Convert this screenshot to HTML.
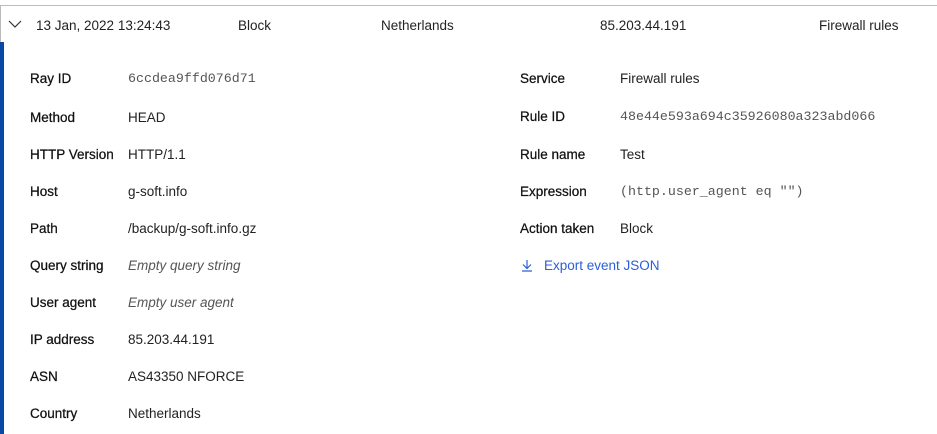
<!DOCTYPE html><html><head><style>
body{margin:0;width:937px;height:434px;overflow:hidden;background:#fff;font-family:"Liberation Sans",sans-serif;font-size:13.5px;color:#222;position:relative}
.t{position:absolute;white-space:nowrap;line-height:16px;margin-top:1px}
.m{font-family:"Liberation Mono",monospace;font-size:13.3px;color:#555}
.i{font-style:italic;color:#555}
.lb{color:#111;-webkit-text-stroke:0.25px #111}
</style></head><body>
<div style="position:absolute;left:0;top:5px;width:937px;height:1px;background:#bbb"></div>
<div style="position:absolute;left:0;top:5px;width:1px;height:38px;background:#bbb"></div>
<div style="position:absolute;left:0;top:42px;width:4px;height:392px;background:#0a48a8"></div>
<svg style="position:absolute;left:8px;top:19px" width="14" height="10"><path d="M1 2 L7 8 L13 2" fill="none" stroke="#333" stroke-width="1.2"/></svg>
<div class="t" style="left:36px;top:17px">13 Jan, 2022 13:24:43</div>
<div class="t" style="left:238px;top:17px">Block</div>
<div class="t" style="left:381px;top:17px">Netherlands</div>
<div class="t" style="left:600px;top:17px">85.203.44.191</div>
<div class="t" style="left:819px;top:17px">Firewall rules</div>

<div class="t lb" style="left:30px;top:70px">Ray ID</div><div class="t m" style="left:128px;top:70px">6ccdea9ffd076d71</div>
<div class="t lb" style="left:30px;top:109px">Method</div><div class="t" style="left:128px;top:109px">HEAD</div>
<div class="t lb" style="left:30px;top:146px">HTTP Version</div><div class="t" style="left:128px;top:146px">HTTP/1.1</div>
<div class="t lb" style="left:30px;top:183px">Host</div><div class="t" style="left:128px;top:183px">g-soft.info</div>
<div class="t lb" style="left:30px;top:220px">Path</div><div class="t" style="left:128px;top:220px">/backup/g-soft.info.gz</div>
<div class="t lb" style="left:30px;top:257px">Query string</div><div class="t i" style="left:128px;top:257px">Empty query string</div>
<div class="t lb" style="left:30px;top:294px">User agent</div><div class="t i" style="left:128px;top:294px">Empty user agent</div>
<div class="t lb" style="left:30px;top:331px">IP address</div><div class="t" style="left:128px;top:331px">85.203.44.191</div>
<div class="t lb" style="left:30px;top:368px">ASN</div><div class="t" style="left:128px;top:368px">AS43350 NFORCE</div>
<div class="t lb" style="left:30px;top:405px">Country</div><div class="t" style="left:128px;top:405px">Netherlands</div>

<div class="t lb" style="left:520px;top:70px">Service</div><div class="t" style="left:620px;top:70px">Firewall rules</div>
<div class="t lb" style="left:520px;top:108px">Rule ID</div><div class="t m" style="left:620px;top:108px">48e44e593a694c35926080a323abd066</div>
<div class="t lb" style="left:520px;top:146px">Rule name</div><div class="t" style="left:620px;top:146px">Test</div>
<div class="t lb" style="left:520px;top:183px">Expression</div><div class="t m" style="left:620px;top:183px">(http.user_agent eq "")</div>
<div class="t lb" style="left:520px;top:220px">Action taken</div><div class="t" style="left:620px;top:220px">Block</div>
<svg style="position:absolute;left:521px;top:259px" width="12" height="13"><path d="M6 1 V9 M2 5.5 L6 9.5 L10 5.5 M1 12 H11" fill="none" stroke="#2b5fd9" stroke-width="1.2"/></svg>
<div class="t" style="left:544px;top:257px;color:#2b5fd9">Export event JSON</div>
</body></html>
